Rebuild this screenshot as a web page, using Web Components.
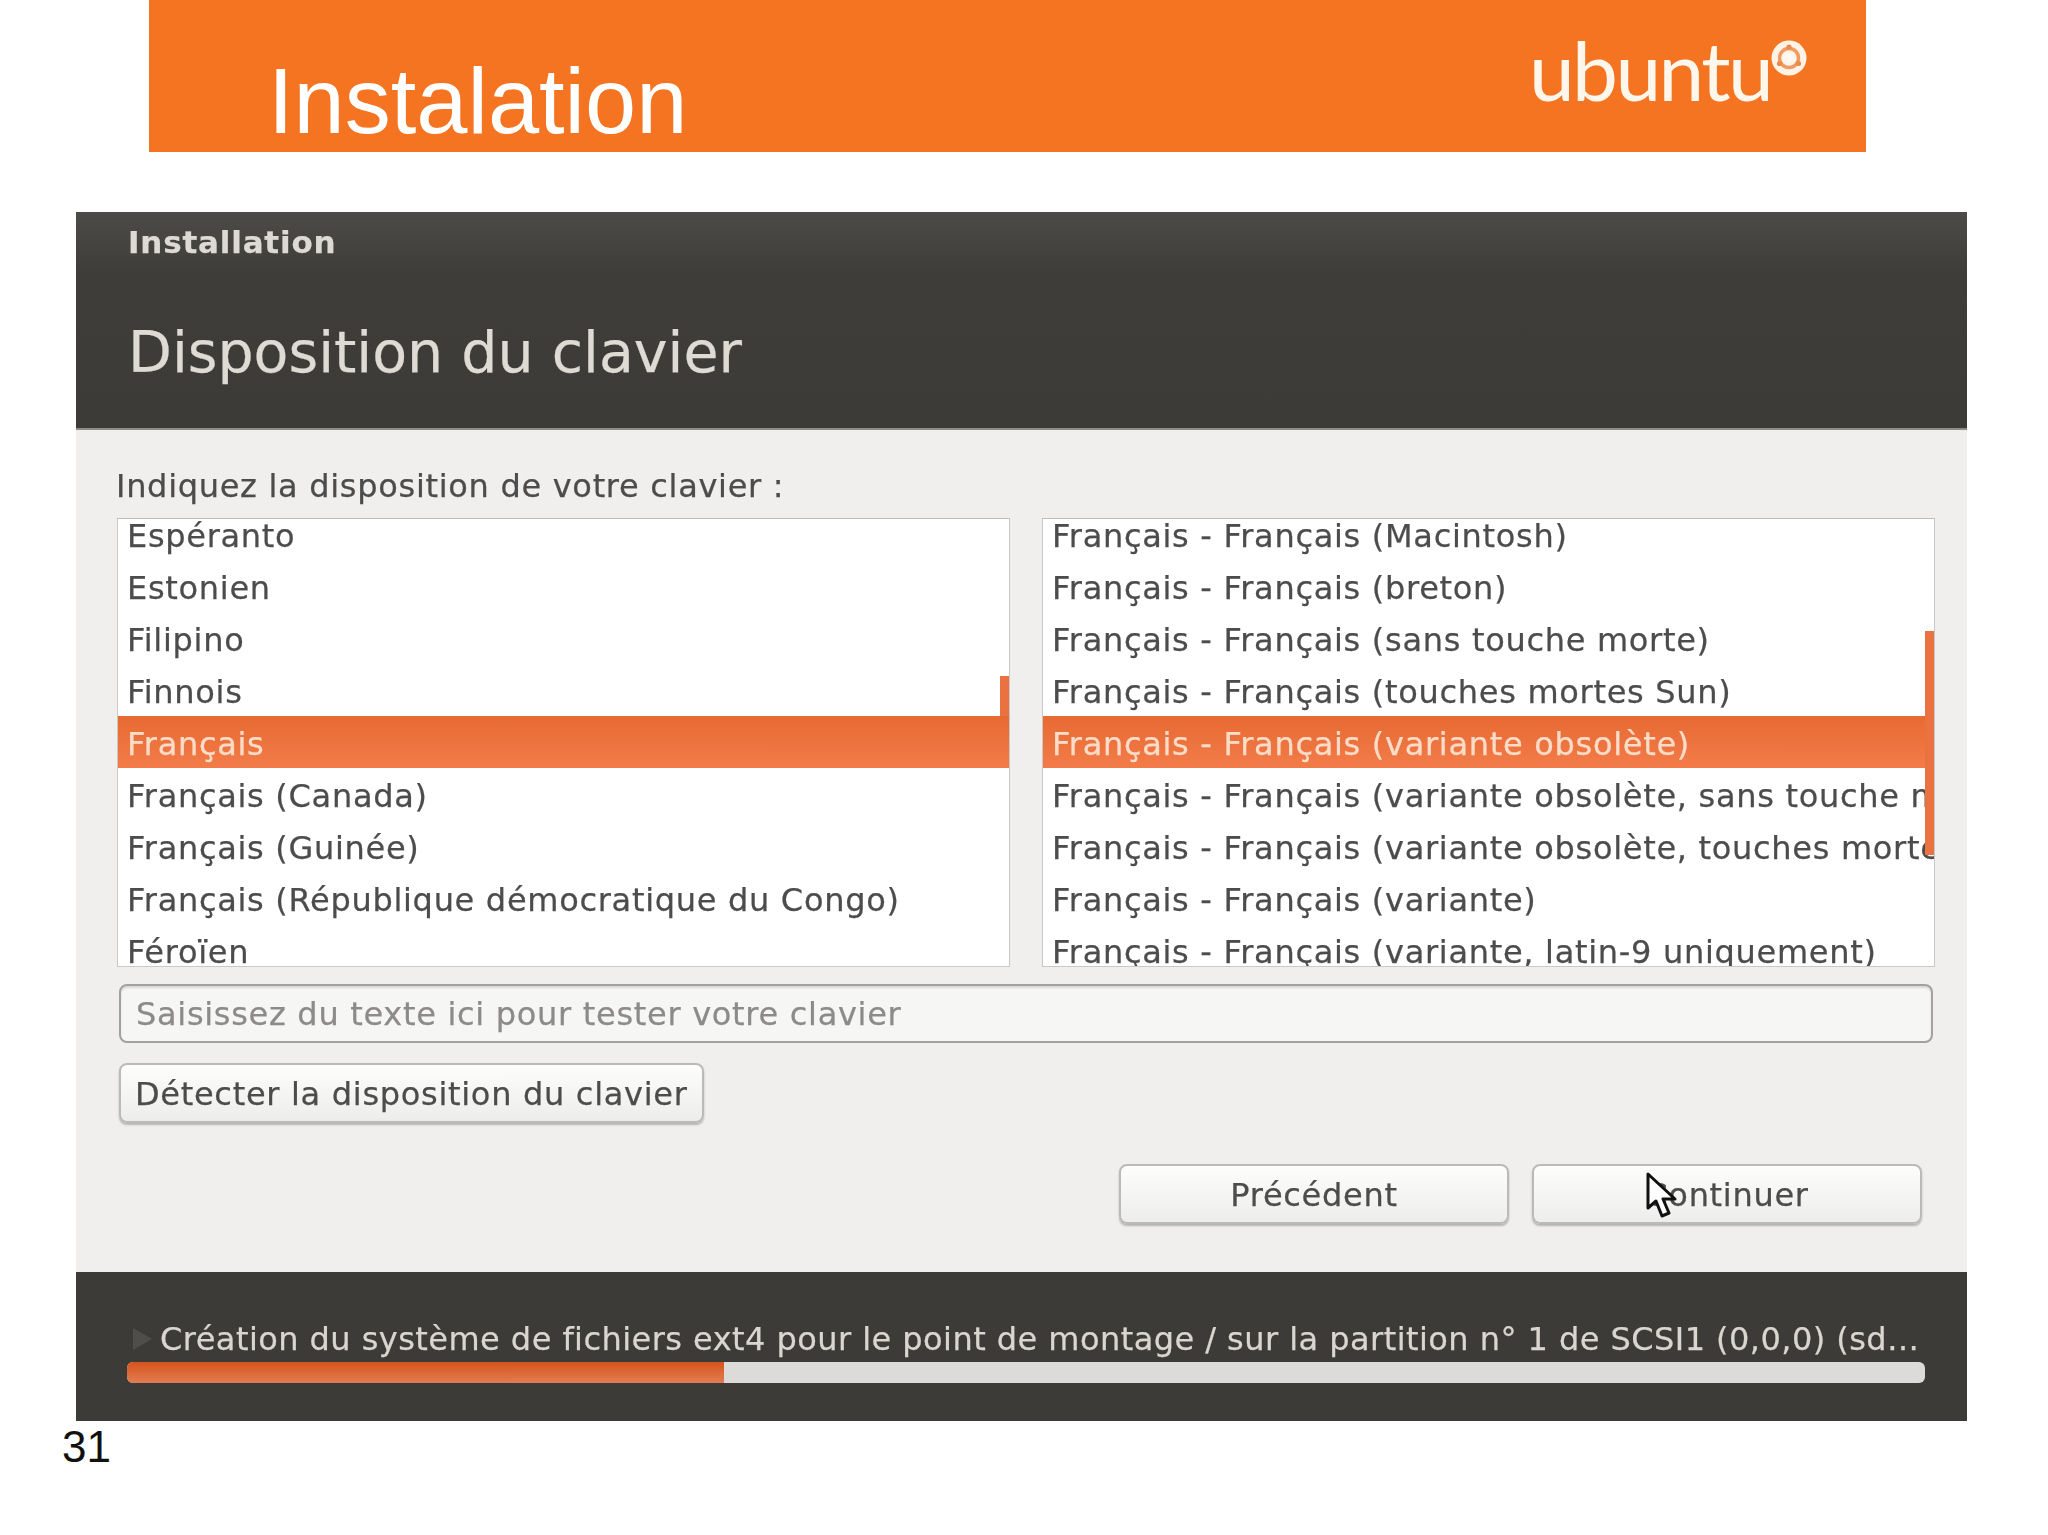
<!DOCTYPE html>
<html lang="fr">
<head>
<meta charset="utf-8">
<title>Instalation</title>
<style>
  html, body { margin: 0; padding: 0; background: #fff; }
</style>
</head>
<body>
<slide-page>
  <slide-banner slot="banner" title-text="Instalation"></slide-banner>
  <installer-window slot="window">
    <installer-header slot="header" step="Installation" heading="Disposition du clavier"></installer-header>
    <keyboard-step slot="body">
      <key-list slot="left" thumb-top="157" thumb-height="40">
        <key-row>Espéranto</key-row>
        <key-row>Estonien</key-row>
        <key-row>Filipino</key-row>
        <key-row>Finnois</key-row>
        <key-row selected>Français</key-row>
        <key-row>Français (Canada)</key-row>
        <key-row>Français (Guinée)</key-row>
        <key-row>Français (République démocratique du Congo)</key-row>
        <key-row>Féroïen</key-row>
      </key-list>
      <key-list slot="right" thumb-top="112" thumb-height="224">
        <key-row>Français - Français (Macintosh)</key-row>
        <key-row>Français - Français (breton)</key-row>
        <key-row>Français - Français (sans touche morte)</key-row>
        <key-row>Français - Français (touches mortes Sun)</key-row>
        <key-row selected>Français - Français (variante obsolète)</key-row>
        <key-row>Français - Français (variante obsolète, sans touche morte)</key-row>
        <key-row>Français - Français (variante obsolète, touches mortes Sun)</key-row>
        <key-row>Français - Français (variante)</key-row>
        <key-row>Français - Français (variante, latin-9 uniquement)</key-row>
      </key-list>
    </keyboard-step>
    <install-footer slot="footer" percent="33.2">Création du système de fichiers ext4 pour le point de montage / sur la partition n° 1 de SCSI1 (0,0,0) (sd…</install-footer>
  </installer-window>
  <span slot="number">31</span>
</slide-page>

<script>
(function (window) {
  'use strict';

  const UI_FONT = '"DejaVu Sans", "Noto Sans", sans-serif';

  class SlidePage extends HTMLElement {
    constructor() {
      super();
      this.attachShadow({ mode: 'open' });
      this.shadowRoot.innerHTML = `
      <style>
        :host { display: block; width: 2048px; height: 1535px; overflow: hidden; background: #fff; }
        .banner { display: block; margin-left: 149px; width: 1717px; }
        .window { display: block; margin: 60px 0 0 76px; width: 1891px; }
        .number {
          margin: 1px 0 0 62px;
          font: 44px/50px "Liberation Sans", Arial, sans-serif;
          color: #111;
        }
      </style>
      <div class="banner"><slot name="banner"></slot></div>
      <div class="window"><slot name="window"></slot></div>
      <div class="number"><slot name="number"></slot></div>
    `;
    }
  }
  window.customElements.define('slide-page', SlidePage);

  class SlideBanner extends HTMLElement {
    constructor() {
      super();
      this.attachShadow({ mode: 'open' });
      this.shadowRoot.innerHTML = `
      <style>
        :host {
          display: flex;
          justify-content: space-between;
          height: 152px;
          background: #f47421;
          color: #fff;
          box-sizing: border-box;
          padding: 0 59px 0 119px;
        }
        h1 {
          margin: 55px 0 0;
          font: 400 92px/92px "Liberation Sans", Arial, sans-serif;
        }
        .brand { display: flex; align-items: flex-start; padding-top: 25px; }
        .word {
          font: 400 82px/88px Lato, "Noto Sans", sans-serif;
          letter-spacing: -2.6px;
          color: #fff6ec;
          width: 242px;
        }
        svg { width: 36px; height: 36px; margin: 15px 0 0 0; }
      </style>
      <h1>${this.getAttribute('title-text')}</h1>
      <div class="brand">
        <span class="word">ubuntu</span>
        <svg viewBox="0 0 36 36" aria-hidden="true">
          <circle cx="18" cy="18" r="17.5" fill="#fff3e6"/>
          <circle cx="18" cy="18" r="9.5" fill="none" stroke="#ee9a60" stroke-width="3.4"/>
          <circle cx="18" cy="18" r="5" fill="#fff8f0"/>
          <circle cx="18" cy="7" r="2.6" fill="#ea8a4c"/>
          <circle cx="8.5" cy="23.5" r="2.6" fill="#ea8a4c"/>
          <circle cx="27.5" cy="23.5" r="2.6" fill="#ea8a4c"/>
        </svg>
      </div>
    `;
    }
  }
  window.customElements.define('slide-banner', SlideBanner);

  class InstallerWindow extends HTMLElement {
    constructor() {
      super();
      this.attachShadow({ mode: 'open' });
      this.shadowRoot.innerHTML = `
      <style>
        :host {
          display: flex;
          flex-direction: column;
          height: 1209px;
          background: #f0efee;
          font-family: ${UI_FONT};
          -webkit-text-stroke: 0.25px currentColor;
          filter: blur(0.5px);
        }
      </style>
      <slot name="header"></slot>
      <slot name="body"></slot>
      <slot name="footer"></slot>
    `;
    }
  }
  window.customElements.define('installer-window', InstallerWindow);

  class InstallerHeader extends HTMLElement {
    constructor() {
      super();
      this.attachShadow({ mode: 'open' });
      this.shadowRoot.innerHTML = `
      <style>
        :host {
          display: flex;
          flex-direction: column;
          box-sizing: border-box;
          height: 218px;
          padding: 10px 0 0 52px;
          background: linear-gradient(#4d4b48, #3e3d39 28%, #3c3b37);
          border-bottom: 2px solid #8f8d89;
        }
        .step { font-size: 31px; line-height: 40px; font-weight: 700; letter-spacing: 0.8px; color: #dddad5; }
        h2 { margin: 50px 0 0; font-size: 57px; line-height: 80px; font-weight: 400; color: #dedbd5; }
      </style>
      <div class="step">${this.getAttribute('step')}</div>
      <h2>${this.getAttribute('heading')}</h2>
    `;
    }
  }
  window.customElements.define('installer-header', InstallerHeader);

  class KeyboardStep extends HTMLElement {
    constructor() {
      super();
      this.attachShadow({ mode: 'open' });
      this.shadowRoot.innerHTML = `
      <style>
        :host {
          display: flex;
          flex-direction: column;
          box-sizing: border-box;
          height: 842px;
          padding: 36px 32px 0 41px;
          color: #4c4c4c;
          font-size: 32px;
          letter-spacing: 0.7px;
        }
        .label { line-height: 40px; margin: 0 0 12px -1px; }
        .lists { display: grid; grid-template-columns: 1fr 1fr; gap: 32px; height: 449px; }
        .entry {
          margin: 17px 2px 0 2px;
          height: 59px;
          box-sizing: border-box;
          border: 2px solid #a3a19e;
          border-radius: 8px;
          background: #f6f6f5;
          padding-left: 15px;
          line-height: 57px;
          color: #8c8b8a;
          box-shadow: inset 0 2px 2px #d8d7d5;
        }
        .detect { margin: 20px 0 0 2px; align-self: flex-start; }
        .nav { display: flex; justify-content: flex-end; gap: 23px; margin: 41px 13px 0 0; }
      </style>
      <div class="label">Indiquez la disposition de votre clavier :</div>
      <div class="lists">
        <slot name="left"></slot>
        <slot name="right"></slot>
      </div>
      <div class="entry">Saisissez du texte ici pour tester votre clavier</div>
      <push-button class="detect" pad="14">Détecter la disposition du clavier</push-button>
      <div class="nav">
        <push-button wide>Précédent</push-button>
        <push-button wide>Continuer<mouse-cursor></mouse-cursor></push-button>
      </div>
    `;
    }
  }
  window.customElements.define('keyboard-step', KeyboardStep);

  class KeyList extends HTMLElement {
    constructor() {
      super();
      this.attachShadow({ mode: 'open' });
      this.shadowRoot.innerHTML = `
      <style>
        :host {
          display: block;
          position: relative;
          overflow: hidden;
          box-sizing: border-box;
          height: 449px;
          background: #fff;
          border: 1px solid #c9c8c6;
          border-top-color: #bdbcba;
        }
        .rows { margin-top: -11px; }
        .thumb {
          position: absolute;
          right: 0;
          width: 9px;
          top: ${this.getAttribute('thumb-top')}px;
          height: ${this.getAttribute('thumb-height')}px;
          background: #ea7240;
        }
      </style>
      <div class="rows"><slot></slot></div>
      <div class="thumb"></div>
    `;
    }
  }
  window.customElements.define('key-list', KeyList);

  class KeyRow extends HTMLElement {
    constructor() {
      super();
      this.attachShadow({ mode: 'open' });
      this.shadowRoot.innerHTML = `
      <style>
        :host {
          display: block;
          box-sizing: border-box;
          height: 52px;
          padding: 3px 0 0 9px;
          line-height: 51px;
          white-space: nowrap;
          overflow: hidden;
          color: #4c4c4c;
        }
        :host([selected]) {
          background: linear-gradient(#e76a33, #f27c49);
          color: #fbdcc8;
        }
      </style>
      <slot></slot>
    `;
    }
  }
  window.customElements.define('key-row', KeyRow);

  class PushButton extends HTMLElement {
    constructor() {
      super();
      const pad = this.getAttribute('pad') || 0;
      this.attachShadow({ mode: 'open' });
      this.shadowRoot.innerHTML = `
      <style>
        :host {
          display: flex;
          position: relative;
          align-items: center;
          justify-content: center;
          box-sizing: border-box;
          height: 60px;
          padding: 2px ${pad}px 0;
          border: 2px solid #bcbab7;
          border-radius: 8px;
          background: linear-gradient(#fdfdfc, #ededec);
          box-shadow: 0 2px 2px #b5b4b2;
          color: #4c4c4c;
        }
        :host([wide]) { width: 390px; }
      </style>
      <slot></slot>
    `;
    }
  }
  window.customElements.define('push-button', PushButton);

  // mouse pointer caught in the screenshot, lies over the Continuer button
  class MouseCursor extends HTMLElement {
    constructor() {
      super();
      this.attachShadow({ mode: 'open' });
      this.shadowRoot.innerHTML = `
      <style>
        :host { position: absolute; left: 112px; top: 6px; width: 32px; height: 46px; }
        svg { display: block; width: 32px; height: 46px; }
      </style>
      <svg viewBox="0 0 32 46" aria-hidden="true">
        <path d="M2 2 L2 36 L10 29 L16 44 L23 41 L17 27 L29 27 Z" fill="#fff" stroke="#111" stroke-width="3" stroke-linejoin="round"/>
      </svg>
    `;
    }
  }
  window.customElements.define('mouse-cursor', MouseCursor);

  class InstallFooter extends HTMLElement {
    constructor() {
      super();
      this.attachShadow({ mode: 'open' });
      this.shadowRoot.innerHTML = `
      <style>
        :host {
          display: block;
          box-sizing: border-box;
          height: 149px;
          padding: 47px 42px 0 51px;
          background: #3c3b37;
          color: #d9d6d0;
        }
        .line { display: flex; align-items: center; gap: 8px; padding-left: 6px; height: 40px; }
        .arrow {
          width: 0; height: 0;
          border-left: 19px solid #4f4e4a;
          border-top: 11px solid transparent;
          border-bottom: 11px solid transparent;
        }
        .text { font-size: 32px; letter-spacing: 0.45px; line-height: 40px; white-space: nowrap; }
        .trough {
          margin-top: 3px;
          height: 21px;
          border-radius: 6px;
          background: #dcdbd9;
          overflow: hidden;
        }
        .fill {
          width: ${this.getAttribute('percent')}%;
          height: 100%;
          background: linear-gradient(#d6541d, #e27c52);
        }
      </style>
      <div class="line"><span class="arrow"></span><span class="text"><slot></slot></span></div>
      <div class="trough"><div class="fill"></div></div>
    `;
    }
  }
  window.customElements.define('install-footer', InstallFooter);

})(window);
</script>
</body>
</html>
